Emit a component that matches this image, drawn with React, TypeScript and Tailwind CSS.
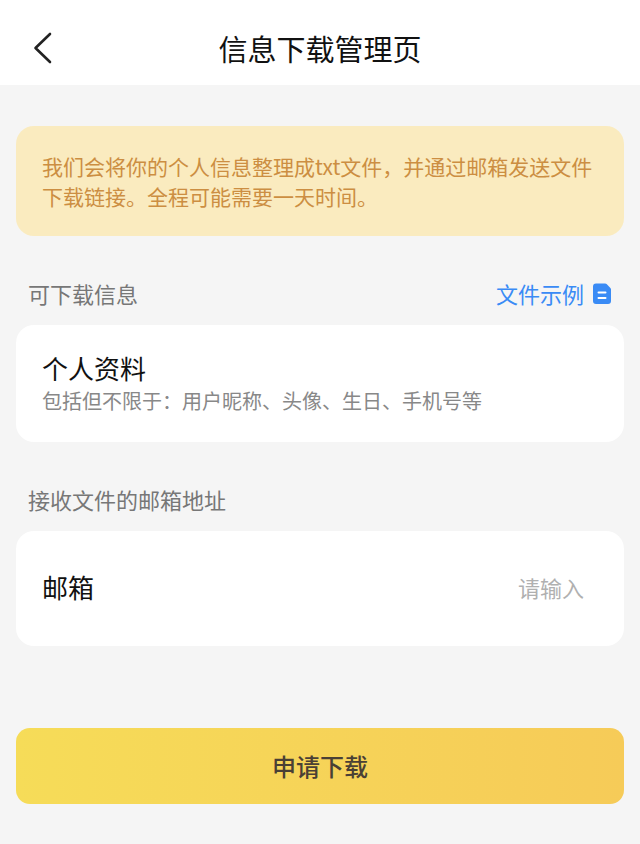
import React from 'react'

interface SectionHeadingProps {
  title: string
  children?: React.ReactNode
}

const SectionHeading = ({ title, children }: SectionHeadingProps) => {
  return (
    <div className="mb-4 flex items-center justify-between px-3 text-[22px] leading-8 text-[#777777]">
      <h2>{title}</h2>
      {children}
    </div>
  )
}

const BackIcon = () => {
  return (
    <svg className="h-9 w-5" viewBox="0 0 20 36" fill="none" aria-hidden="true">
      <path d="M18 4 3.5 18 18 32" stroke="#222222" strokeWidth="2.6" strokeLinecap="round" strokeLinejoin="round" />
    </svg>
  )
}

const FileIcon = () => {
  return (
    <svg className="h-[22px] w-5" viewBox="0 0 20 22" aria-hidden="true">
      <path
        d="M4 1.5h9.2a2 2 0 0 1 1.4.6l3.8 3.8a2 2 0 0 1 .6 1.4V19a3 3 0 0 1-3 3H4a3 3 0 0 1-3-3V4.500a3 3 0 0 1 3-3Z"
        fill="#3a8bf5"
      />
      <path d="M6.500 10.500h7M6.500 16h7" stroke="#ffffff" strokeWidth="2" strokeLinecap="round" />
    </svg>
  )
}

const App = () => {
  return (
    <div className="min-h-screen bg-[#f5f5f5] font-['Noto_Sans_CJK_SC',sans-serif] text-[#111111]">
      <header className="grid grid-cols-[1fr_auto_1fr] items-center bg-white px-8 pt-[30px] pb-[19px]">
        <button type="button" aria-label="返回" className="justify-self-start">
          <BackIcon />
        </button>
        <h1 className="text-[29px] leading-9">信息下载管理页</h1>
      </header>

      <main className="px-4 py-[41px]">
        <p className="rounded-[18px] bg-[#faebbf] px-[26px] py-[25px] text-[21px] leading-[30px] text-[#cc8e42]">
          我们会将你的个人信息整理成txt文件，并通过邮箱发送文件下载链接。全程可能需要一天时间。
        </p>

        <section className="mt-[41px]">
          <SectionHeading title="可下载信息">
            <a href="#example" className="flex items-center gap-2 text-[#3a8bf5]">
              文件示例
              <FileIcon />
            </a>
          </SectionHeading>
          <div className="rounded-[18px] bg-white px-[26px] py-[25px]">
            <h3 className="text-[26px] leading-[35px]">个人资料</h3>
            <p className="text-xl leading-8 text-[#888888]">包括但不限于：用户昵称、头像、生日、手机号等</p>
          </div>
        </section>

        <form className="mt-[41px]">
          <SectionHeading title="接收文件的邮箱地址" />
          <div className="flex items-center rounded-[18px] bg-white px-[26px] pt-[38px] pb-[42px]">
            <label htmlFor="email" className="text-[26px] leading-[35px]">
              邮箱
            </label>
            <input
              id="email"
              type="email"
              placeholder="请输入"
              className="h-[35px] min-w-0 flex-1 pr-3.5 text-right text-[22px] outline-none placeholder:text-[#b0b0b0]"
            />
          </div>
          <button
            type="button"
            className="mt-[82px] w-full rounded-[14px] bg-linear-to-r from-[#f6dc58] to-[#f6cb58] py-5 text-2xl leading-9 font-medium text-[#4a4035]"
          >
            申请下载
          </button>
        </form>
      </main>
    </div>
  )
}

export default App
